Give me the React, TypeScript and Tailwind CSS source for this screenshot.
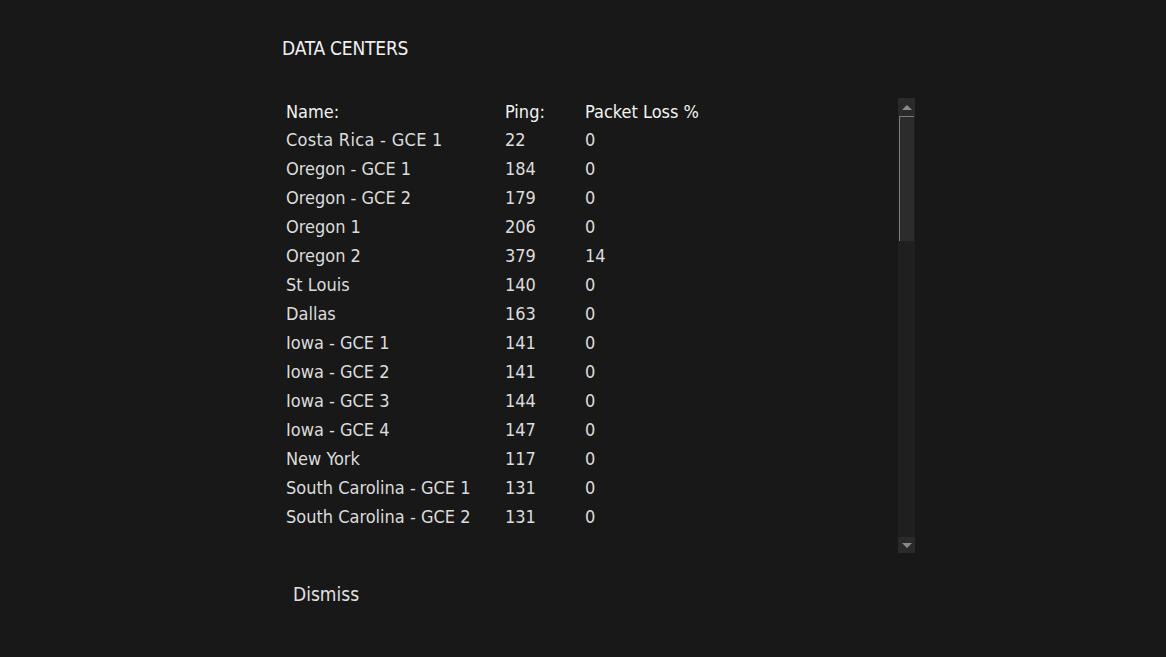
import React from "react";

const rows: [string, string, string][] = [
  ["Costa Rica - GCE 1", "22", "0"],
  ["Oregon - GCE 1", "184", "0"],
  ["Oregon - GCE 2", "179", "0"],
  ["Oregon 1", "206", "0"],
  ["Oregon 2", "379", "14"],
  ["St Louis", "140", "0"],
  ["Dallas", "163", "0"],
  ["Iowa - GCE 1", "141", "0"],
  ["Iowa - GCE 2", "141", "0"],
  ["Iowa - GCE 3", "144", "0"],
  ["Iowa - GCE 4", "147", "0"],
  ["New York", "117", "0"],
  ["South Carolina - GCE 1", "131", "0"],
  ["South Carolina - GCE 2", "131", "0"],
];

export default function App() {
  return (
    <div
      className="w-[1166px] h-[657px] bg-[#181818] text-[#dcdcdc] overflow-hidden"
      style={{ fontFamily: '"DejaVu Sans Condensed", "Liberation Sans", sans-serif' }}
    >
      <div className="pl-[282px] pt-[37px] flex flex-col">
        <div className="text-[19px] leading-[22px] text-[#f0f0f0] tracking-[-0.2px]">DATA CENTERS</div>
        <div className="mt-[39px] flex w-[633px]">
          <div className="flex-1 pl-[4px]">
            <div className="flex h-[27px] items-center text-[18px] text-[#f2f2f2]">
              <div className="w-[219px]">Name:</div>
              <div className="w-[80px]">Ping:</div>
              <div>Packet Loss %</div>
            </div>
            {rows.map(([n, p, l], i) => (
              <div key={i} className="flex h-[29px] items-center text-[18px]">
                <div className={"w-[219px] " + (i === 0 ? "tracking-[0.3px]" : "")}>{n}</div>
                <div className="w-[80px]">{p}</div>
                <div>{l}</div>
              </div>
            ))}
          </div>
          <div className="w-[17px] h-[455px] bg-[#1f1f1f] flex flex-col">
            <div className="h-[18px] bg-[#2a2a2a] flex items-center justify-center">
              <div className="w-0 h-0 border-l-[5px] border-r-[5px] border-b-[5px] border-l-transparent border-r-transparent border-b-[#8a8a8a]" />
            </div>
            <div className="mx-[1px] h-[125px] bg-[#2c2c2c] border-l border-t border-[#7a7a7a]" />
            <div className="flex-1" />
            <div className="h-[16px] bg-[#2a2a2a] flex items-center justify-center">
              <div className="w-0 h-0 border-l-[5px] border-r-[5px] border-t-[5px] border-l-transparent border-r-transparent border-t-[#8a8a8a]" />
            </div>
          </div>
        </div>
        <div className="mt-[27px] pl-[11px] text-[19px] text-[#e0e0e0]">Dismiss</div>
      </div>
    </div>
  );
}
